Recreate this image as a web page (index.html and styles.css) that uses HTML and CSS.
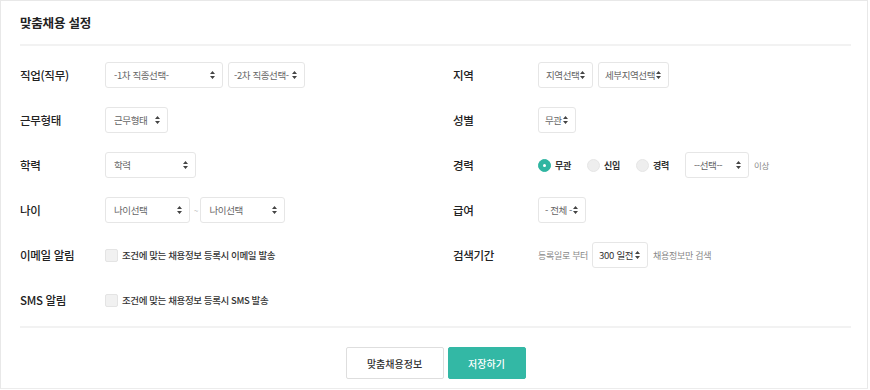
FILE: index.html
```html
<!DOCTYPE html>
<html lang="ko">
<head>
    <meta charset="UTF-8">
    <meta name="viewport" content="width=device-width, initial-scale=1.0">
    <title>맞춤채용 설정</title>
    <link rel="stylesheet" href="styles.css">
</head>
<body>

    <!-- Settings box -->
    <div class="panel">
        <h1 class="panel-title">맞춤채용 설정</h1>

        <div class="form-grid">
            <!-- Row 1 -->
            <div class="field">
                <span class="label">직업(직무)</span>
                <select class="sel w118"><option>-1차 직종선택-</option></select>
                <select class="sel w77"><option>-2차 직종선택-</option></select>
            </div>
            <div class="field">
                <span class="label">지역</span>
                <select class="sel w55"><option>지역선택</option></select>
                <select class="sel w71"><option>세부지역선택</option></select>
            </div>

            <!-- Row 2 -->
            <div class="field">
                <span class="label">근무형태</span>
                <select class="sel w63"><option>근무형태</option></select>
            </div>
            <div class="field">
                <span class="label">성별</span>
                <select class="sel w38"><option>무관</option></select>
            </div>

            <!-- Row 3 -->
            <div class="field">
                <span class="label">학력</span>
                <select class="sel w91"><option>학력</option></select>
            </div>
            <div class="field">
                <span class="label">경력</span>
                <label class="radio checked"><span class="dot"></span>무관</label>
                <label class="radio"><span class="dot"></span>신입</label>
                <label class="radio"><span class="dot"></span>경력</label>
                <select class="sel w64"><option>--선택--</option></select>
                <span class="note small">이상</span>
            </div>

            <!-- Row 4 -->
            <div class="field">
                <span class="label">나이</span>
                <select class="sel w85 before-tilde"><option>나이선택</option></select>
                <span class="tilde">~</span>
                <select class="sel w85"><option>나이선택</option></select>
            </div>
            <div class="field">
                <span class="label">급여</span>
                <select class="sel w48"><option>- 전체 -</option></select>
            </div>

            <!-- Row 5 -->
            <div class="field">
                <span class="label">이메일 알림</span>
                <label class="check"><span class="box"></span>조건에 맞는 채용정보 등록시 이메일 발송</label>
            </div>
            <div class="field">
                <span class="label">검색기간</span>
                <span class="note">등록일로 부터</span>
                <select class="sel w56 dark"><option>300 일전</option></select>
                <span class="note">채용정보만 검색</span>
            </div>

            <!-- Row 6 -->
            <div class="field">
                <span class="label">SMS 알림</span>
                <label class="check"><span class="box"></span>조건에 맞는 채용정보 등록시 SMS 발송</label>
            </div>
            <div class="field"></div>
        </div>

        <div class="actions">
            <button class="btn btn-line">맞춤채용정보</button>
            <button class="btn btn-main">저장하기</button>
        </div>
    </div>

</body>
</html>
```

FILE: styles.css
```css
body {
    font-family: "Noto Sans CJK KR", "Noto Sans", sans-serif;
    margin: 0;
    padding: 0;
    background-color: #fff;
    color: #333;
}
/* Outer box */
.panel {
    width: 868px;
    height: 389px;
    border: 1px solid #e8e8e8;
    border-bottom-color: #ececec;
    padding: 0 16px 0 19px;
    box-sizing: border-box;
}
.panel-title {
    margin: 0;
    padding: 12px 0 11px 0;
    font-size: 12.5px;
    font-weight: bold;
    line-height: 20px;
    letter-spacing: -0.2px;
    color: #222;
    border-bottom: 2px solid #f2f2f2;
}
/* Two column form */
.form-grid {
    display: grid;
    grid-template-columns: 433px 1fr;
    row-gap: 19px;
    padding: 16px 0 13px 0;
    border-bottom: 2px solid #f2f2f2;
}
.field {
    display: flex;
    align-items: center;
    height: 26px;
    font-size: 9px;
}
.label {
    width: 85px;
    flex-shrink: 0;
    font-size: 11.5px;
    font-weight: 500;
    letter-spacing: -0.3px;
    color: #222;
}
/* Select boxes */
.sel {
    appearance: none;
    -webkit-appearance: none;
    height: 26px;
    margin-right: 5px;
    padding: 0 0 0 8px;
    border: 1px solid #e6e6e6;
    border-radius: 3px;
    background-color: #fff;
    background-image: url("data:image/svg+xml;utf8,<svg xmlns='http://www.w3.org/2000/svg' width='5' height='8'><path d='M2.5 0L5 3H0z M2.5 8L0 5h5z' fill='%23444'/></svg>");
    background-repeat: no-repeat;
    background-position: right 7px center;
    font-family: inherit;
    font-size: 9.5px;
    letter-spacing: -0.4px;
    color: #666;
    box-sizing: border-box;
}
.sel.dark {
    color: #333;
    font-size: 9.5px;
    letter-spacing: -0.3px;
    padding-left: 6px;
}
.w38 { width: 38px; padding-left: 6px; }
.w48 { width: 48px; padding-left: 6px; }
.w55 { width: 55px; padding-left: 7px; }
.w56 { width: 56px; }
.w63 { width: 63px; }
.w64 { width: 64px; }
.w71 { width: 71px; padding-left: 6px; }
.w77 { width: 77px; padding-left: 5px; }
.w85 { width: 85px; }
.w91 { width: 91px; }
.w118 { width: 118px; }
.before-tilde {
    margin-right: 4px;
}
.tilde {
    margin-right: 2px;
    color: #999;
    font-size: 8px;
}
.note {
    color: #888;
    font-size: 9px;
    letter-spacing: -0.3px;
    margin-right: 4px;
}
.note.small {
    font-size: 8.5px;
    margin-left: 0;
}
/* Radio buttons */
.radio {
    display: flex;
    align-items: center;
    margin-right: 16px;
    font-size: 9px;
    font-weight: bold;
    letter-spacing: -0.3px;
    color: #333;
}
.radio .dot {
    width: 13px;
    height: 13px;
    border-radius: 50%;
    background-color: #eee;
    border: 1px solid #e6e6e6;
    box-sizing: border-box;
    margin-right: 4px;
    position: relative;
}
.radio.checked .dot {
    background-color: #2fb5a1;
    border-color: #2fb5a1;
}
.radio.checked .dot::after {
    content: "";
    position: absolute;
    left: 4px;
    top: 4px;
    width: 3px;
    height: 3px;
    border-radius: 50%;
    background-color: #fff;
}
/* Checkbox */
.check {
    display: flex;
    align-items: center;
    font-size: 9.5px;
    font-weight: 500;
    letter-spacing: -0.4px;
    color: #333;
}
.check .box {
    width: 13px;
    height: 13px;
    border-radius: 2px;
    background-color: #f1f1f1;
    border: 1px solid #e4e4e4;
    box-sizing: border-box;
    margin-right: 4px;
}
/* Bottom buttons */
.actions {
    display: flex;
    justify-content: center;
    gap: 4px;
    padding-top: 19px;
}
.btn {
    height: 32px;
    border-radius: 2px;
    font-family: inherit;
    font-size: 10px;
    font-weight: 500;
    cursor: pointer;
}
.btn-line {
    width: 98px;
    background-color: #fff;
    border: 1px solid #dedede;
    color: #333;
}
.btn-main {
    width: 78px;
    background-color: #33b8a5;
    border: 1px solid #33b8a5;
    color: #fff;
}
```
